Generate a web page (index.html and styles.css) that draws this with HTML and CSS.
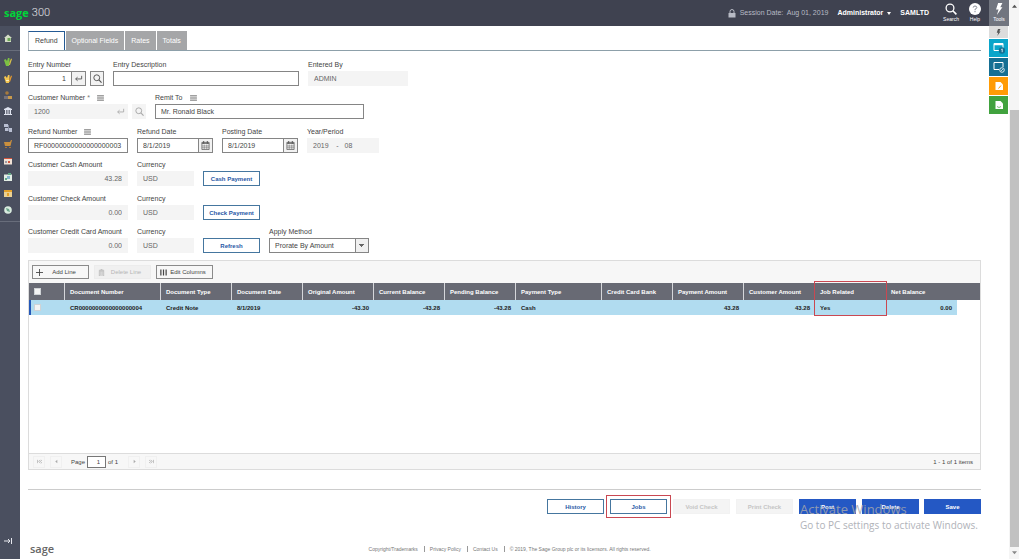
FILE: index.html
```html
<!DOCTYPE html>
<html lang="en">
<head>
<meta charset="utf-8">
<title>Refund Entry</title>
<link rel="stylesheet" href="styles.css">
</head>
<body>
<svg class="defs" aria-hidden="true">
  <symbol id="search" viewBox="0 0 12 12"><circle cx="5" cy="5" r="3.900" fill="none" stroke="currentColor" stroke-width="1.300"/><path d="M7.800 7.800l3.600 3.600" stroke="currentColor" stroke-width="1.600"/></symbol>
  <symbol id="enter" viewBox="0 0 10 8"><path d="M8.500 1v3.500H2M4 2.500l-2.200 2L4 6.500" fill="none" stroke="currentColor"/></symbol>
  <symbol id="menu" viewBox="0 0 8 7"><path d="M0 1h8M0 3.500h8M0 6h8" stroke="currentColor"/></symbol>
  <symbol id="cal" viewBox="0 0 10 10"><path d="M1 1.500h8v8H1z" fill="none" stroke="currentColor" stroke-width=".8"/><path d="M1 2.500h8M3 0v3M7 0v3" stroke="currentColor" stroke-width="1.100"/><path d="M1 5.500h8M1 7.500h8M3.600 4v5M6.400 4v5" stroke="currentColor" stroke-width=".5"/></symbol>
  <symbol id="bolt" viewBox="0 0 10 14"><path d="M4 0h5L6.500 5H9L2.500 14 4.500 7.500H1.500z" fill="currentColor"/></symbol>
</svg>
<div class="app">
  <header class="top">
    <div class="brand"><span class="sage">sage</span><span class="num">300</span></div>
    <div class="session">
      <svg class="lock" viewBox="0 0 8 9"><path d="M2 4V2.500a2 2 0 0 1 4 0V4" fill="none" stroke="currentColor"/><path d="M.5 4h7v4.500h-7z" fill="currentColor"/></svg>
      <span>Session Date:&nbsp; Aug 01, 2019</span>
    </div>
    <button class="user">Administrator <svg viewBox="0 0 4 3"><path d="M0 0h4L2 3z" fill="currentColor"/></svg></button>
    <span class="company">SAMLTD</span>
    <button class="util"><svg viewBox="0 0 12 12"><use href="#search"/></svg>Search</button>
    <button class="util help"><svg viewBox="0 0 12 12"><circle cx="6" cy="6" r="6" fill="#fff"/><path d="M4.200 4.600Q4.300 3 6 3t1.800 1.500Q7.800 5.600 6 6.300v.9M6 8v1.200" fill="none" stroke="#777c88" stroke-width=".9"/></svg>Help</button>
    <button class="util tools"><svg viewBox="0 0 10 14"><use href="#bolt"/></svg>Tools</button>
  </header>
  <nav class="side" aria-label="Modules">
    <a class="home" href="#" aria-label="Home"><svg viewBox="0 0 8 8"><path d="M0 4l4-3.500L8 4H7v4H1V4z" fill="#d3dcc5"/><path d="M3.500 4h3v3h-3z" fill="#6aa655"/></svg></a>
    <div class="modules">
      <a href="#" aria-label="Receivables"><svg viewBox="0 0 8 8"><path d="M0 2l1.500-1L3 3l1-3h1.500v3L5 8H2z" fill="#7cc143"/><path d="M5.500 4L7 .5l1 .5-2 6H5z" fill="#d8c24a"/></svg></a>
      <a href="#" aria-label="Payables"><svg viewBox="0 0 8 8"><path d="M0 2l1.500-1L3 3l1-3h1.500v3L5 8H2z" fill="#f3c650"/><path d="M5.500 4L7 .5l1 .5-2 6H5z" fill="#e79a2c"/><path d="M2 5h3v1H2z" fill="#fff0bd"/></svg></a>
      <a href="#" aria-label="Customers"><svg viewBox="0 0 8 8"><circle cx="3" cy="2" r="1.800" fill="#a87a3c"/><path d="M0 8V5h4v3z" fill="#77727a"/><path d="M4 5h4v3H4z" fill="#c89a4c"/></svg></a>
      <a href="#" aria-label="Bank"><svg viewBox="0 0 8 8"><path d="M4 0l4 2v1H0V2zM1 3h1.300v4H1zM3.400 3h1.200v4H3.400zM5.700 3H7v4H5.700zM0 7h8v1H0z" fill="#dfe3ef"/></svg></a>
      <a href="#" aria-label="Inventory"><svg viewBox="0 0 8 8"><path d="M0 0h4v3H0zM1 4h3v3H1zM5 4h3v4H5z" fill="#b9bfd2"/><path d="M4 1h1v6H4z" fill="#858ca2"/></svg></a>
      <a href="#" aria-label="Orders"><svg viewBox="0 0 8 8"><path d="M0 2h6l1-2h1L6.500 6H1z" fill="#c98f3e"/><path d="M1 7h2v1H1zM5 7h2v1H5z" fill="#a8763a"/></svg></a>
      <a href="#" aria-label="Purchasing"><svg viewBox="0 0 8 8"><path d="M0 1h8v6.500H0z" fill="#f1e2d6"/><path d="M0 1h8v1H0zM4 4h2v2H4z" fill="#d4563e"/><path d="M1 4h2v2H1z" fill="#9b9aa5"/></svg></a>
      <a href="#" aria-label="Reports"><svg viewBox="0 0 8 8"><path d="M0 1.500h8V8H0z" fill="#e3eee5"/><path d="M4 0h3v2H4zM1 5h2v2H1z" fill="#62a886"/><path d="M3 3h3v3H3z" fill="#88b5cf"/></svg></a>
      <a href="#" aria-label="Projects"><svg viewBox="0 0 8 8"><path d="M0 1h8v7H0z" fill="#ecd191"/><path d="M0 1h8v2H0zM3 4h2v3H3z" fill="#e4a12a"/></svg></a>
      <a href="#" aria-label="Administration"><svg viewBox="0 0 8 8"><circle cx="4" cy="4" r="3.800" fill="#d9ebdf"/><path d="M2 2l3 1 1 3-3-1z" fill="#6aa48a"/></svg></a>
    </div>
    <a class="expand" href="#" aria-label="Expand"><svg viewBox="0 0 8 8"><path d="M0 4h6M4 2l2 2-2 2M7.500 1v6" fill="none" stroke="#e6e8ee"/></svg></a>
  </nav>
  <main class="page">
    <div class="tabs" role="tablist">
      <button class="tab on" role="tab">Refund</button><button class="tab" role="tab">Optional Fields</button><button class="tab" role="tab">Rates</button><button class="tab" role="tab">Totals</button>
    </div>
    <form class="form">
      <div class="row">
        <div class="field w77"><label for="en">Entry Number</label>
          <div class="combo"><input id="en" class="right" value="1"><button type="button" class="ib" aria-label="Go"><svg viewBox="0 0 10 8"><use href="#enter"/></svg></button><button type="button" class="ib apart" aria-label="Find"><svg viewBox="0 0 12 12"><use href="#search"/></svg></button></div></div>
        <div class="field w186 g9"><label for="ed">Entry Description</label><input id="ed"></div>
        <div class="field w100 g9"><label for="eb">Entered By</label><input id="eb" value="ADMIN" disabled></div>
      </div>
      <div class="row">
        <div class="field w118"><label for="cn">Customer Number <i>*</i> <svg class="burger" viewBox="0 0 8 7"><use href="#menu"/></svg></label>
          <div class="combo off"><input id="cn" value="1200" disabled><button type="button" class="ib" disabled aria-label="Go"><svg viewBox="0 0 10 8"><use href="#enter"/></svg></button><button type="button" class="ib apart" disabled aria-label="Find"><svg viewBox="0 0 12 12"><use href="#search"/></svg></button></div></div>
        <div class="field w209 g9"><label for="rt">Remit To <svg class="burger" viewBox="0 0 8 7"><use href="#menu"/></svg></label><input id="rt" value="Mr. Ronald Black"></div>
      </div>
      <div class="row">
        <div class="field w100"><label for="rn">Refund Number <svg class="burger" viewBox="0 0 8 7"><use href="#menu"/></svg></label><input id="rn" value="RF00000000000000000003"></div>
        <div class="field w77 g9"><label for="rd">Refund Date</label><div class="combo"><input id="rd" value="8/1/2019"><button type="button" class="ib" aria-label="Pick refund date"><svg viewBox="0 0 10 10"><use href="#cal"/></svg></button></div></div>
        <div class="field w77 g9"><label for="pd">Posting Date</label><div class="combo"><input id="pd" value="8/1/2019"><button type="button" class="ib" aria-label="Pick posting date"><svg viewBox="0 0 10 10"><use href="#cal"/></svg></button></div></div>
        <div class="field w72 g9"><label for="yp">Year/Period</label><input id="yp" value="2019 &nbsp;&nbsp; - &nbsp;&nbsp;08" disabled></div>
      </div>
      <div class="row">
        <div class="field w100"><label for="ca">Customer Cash Amount</label><input id="ca" class="right" value="43.28" disabled></div>
        <div class="field w57 g9"><label for="c1">Currency</label><input id="c1" value="USD" disabled></div>
        <button type="button" class="btn g9">Cash Payment</button>
      </div>
      <div class="row">
        <div class="field w100"><label for="ck">Customer Check Amount</label><input id="ck" class="right" value="0.00" disabled></div>
        <div class="field w57 g9"><label for="c2">Currency</label><input id="c2" value="USD" disabled></div>
        <button type="button" class="btn g9">Check Payment</button>
      </div>
      <div class="row">
        <div class="field w100"><label for="cc">Customer Credit Card Amount</label><input id="cc" class="right" value="0.00" disabled></div>
        <div class="field w57 g9"><label for="c3">Currency</label><input id="c3" value="USD" disabled></div>
        <button type="button" class="btn g9">Refresh</button>
        <div class="field w100 g9"><label for="am">Apply Method</label><select id="am"><option>Prorate By Amount</option></select></div>
      </div>
    </form>
    <section class="grid">
      <div class="bar">
        <button class="gb"><svg viewBox="0 0 8 8"><path d="M4 0v8M0 4h8" stroke="currentColor"/></svg><span>Add Line</span></button>
        <button class="gb" disabled><svg viewBox="0 0 8 8"><path d="M1 1.500h6M3 .5h2M1.500 2.500h5V8h-5zM3.200 3v4M4.800 3v4" fill="none" stroke="currentColor" stroke-width=".9"/></svg><span>Delete Line</span></button>
        <button class="gb"><svg viewBox="0 0 8 8"><path d="M1 .5v7M4 .5v7M7 .5v7" stroke="currentColor" stroke-width="1.400"/></svg><span>Edit Columns</span></button>
      </div>
      <div class="rows">
        <table>
          <colgroup><col class="c-check"><col class="c-doc"><col class="c-std"><col class="c-std"><col class="c-std"><col class="c-std"><col class="c-std"><col class="c-type"><col class="c-std"><col class="c-std"><col class="c-std"><col class="c-std"><col class="c-std"><col></colgroup>
          <thead><tr><th><input type="checkbox" aria-label="Select all"></th><th>Document Number</th><th>Document Type</th><th>Document Date</th><th>Original Amount</th><th>Current Balance</th><th>Pending Balance</th><th>Payment Type</th><th>Credit Card Bank</th><th>Payment Amount</th><th>Customer Amount</th><th class="mark">Job Related</th><th>Net Balance</th><th></th></tr></thead>
          <tbody><tr><td class="sel"><input type="checkbox" aria-label="Select line"></td><td>CR0000000000000000004</td><td>Credit Note</td><td>8/1/2019</td><td class="n">-43.30</td><td class="n">-43.28</td><td class="n">-43.28</td><td>Cash</td><td></td><td class="n">43.28</td><td class="n">43.28</td><td>Yes</td><td class="n">0.00</td><td class="rest"></td></tr></tbody>
        </table>
      </div>
      <div class="pager">
        <button disabled aria-label="First"><svg viewBox="0 0 6 6"><path d="M.5 1v4M4 1L2 3l2 2M6 1L4 3l2 2" fill="none" stroke="currentColor" stroke-width=".9"/></svg></button>
        <button disabled aria-label="Previous"><svg viewBox="0 0 6 6"><path d="M1.500 3L4 .8v4.400z" fill="currentColor"/></svg></button>
        <label for="pg">Page</label><input id="pg" value="1"><span class="of">of 1</span>
        <button disabled aria-label="Next"><svg viewBox="0 0 6 6"><path d="M4.500 3L2 .8v4.400z" fill="currentColor"/></svg></button>
        <button disabled aria-label="Last"><svg viewBox="0 0 6 6"><path d="M5.500 1v4M2 1l2 2-2 2M0 1l2 2-2 2" fill="none" stroke="currentColor" stroke-width=".9"/></svg></button>
        <span class="count">1 - 1 of 1 items</span>
      </div>
    </section>
    <div class="actions">
      <button class="btn">History</button><button class="btn outlined">Jobs</button><button class="btn" disabled>Void Check</button><button class="btn" disabled>Print Check</button><button class="btn primary">Post</button><button class="btn primary">Delete</button><button class="btn primary last">Save</button>
      <div class="notice"><strong>Activate Windows</strong><span>Go to PC settings to activate Windows.</span></div>
    </div>
    <footer class="foot">
      <span class="mini">sage</span>
      <div class="legal"><a href="#">Copyright/Trademarks</a><a href="#">Privacy Policy</a><a href="#">Contact Us</a><span>© 2019, The Sage Group plc or its licensors. All rights reserved.</span></div>
    </footer>
  </main>
  <aside class="rail">
    <button class="r0" aria-label="Tools"><svg viewBox="0 0 10 14"><use href="#bolt"/></svg></button>
    <button class="r1" aria-label="Open windows"><svg viewBox="0 0 12 12"><path d="M1 1.500h9v7H1z" fill="none" stroke="#fff"/><path d="M1 2.500h9" stroke="#fff" stroke-width="1.500"/><circle cx="9" cy="8.500" r="3.200" fill="#156f93"/><path d="M8.300 7.500l.9-.6v3.300" fill="none" stroke="#fff" stroke-width=".8"/></svg></button>
    <button class="r2" aria-label="Recent windows"><svg viewBox="0 0 12 12"><path d="M6 8.500H1v-7h9V6" fill="none" stroke="#fff"/><circle cx="9" cy="9" r="2.300" fill="#156f93" stroke="#fff" stroke-width=".8"/><path d="M8 10l2-2" stroke="#fff" stroke-width=".7"/></svg></button>
    <button class="r3" aria-label="Edit report"><svg viewBox="0 0 12 12"><path d="M2.500 2h5L10 4.500V10H2.500z" fill="#fff"/><path d="M5.500 8.500L8 5.500" stroke="#ff9b05"/></svg></button>
    <button class="r4" aria-label="Report"><svg viewBox="0 0 12 12"><path d="M2.500 2h5L10 4.500V10H2.500z" fill="#fff"/><path d="M4 7.500l2 1 2-1" fill="none" stroke="#41a23e" stroke-width=".7"/></svg></button>
  </aside>
  <div class="scroll" aria-hidden="true"><svg viewBox="0 0 6 4"><path d="M0 4l3-3.500L6 4z" fill="#555"/></svg><i></i><svg viewBox="0 0 6 4"><path d="M0 0h6L3 3.500z" fill="#888"/></svg></div>
</div>
</body>
</html>
```
FILE: styles.css
```css
* { box-sizing: border-box; }
body { margin: 0; background: #fff; color: #444; font: 7px/10px "Liberation Sans", Arial, sans-serif; }
button, input, select { font: inherit; color: inherit; margin: 0; padding: 0; border: 0; border-radius: 0; background: none; }
a { color: inherit; text-decoration: none; }
svg { display: block; }
.defs { display: none; }

.app { display: grid; grid-template: 26px 1fr / 20px minmax(0, 1fr) 20px 15px; min-height: 100vh; }

/* Header */
.top { grid-column: 1 / 4; display: flex; align-items: stretch; background: #3f4250; color: #fff; }
.brand { display: flex; align-items: center; gap: 3px; padding-left: 4px; margin-right: auto; }
.sage { color: #00d639; font: bold 11px/14px "Open Sans", sans-serif; }
.num { font: 300 11px/14px Roboto, sans-serif; color: #e5e6ea; }
.session { display: flex; align-items: center; gap: 4px; color: #b8bbc5; }
.lock { width: 8px; height: 9px; }
.user { display: flex; align-items: center; gap: 4px; margin-left: 9px; font-weight: bold; }
.user svg { width: 4px; height: 3px; }
.company { align-self: center; margin: 0 10px 0 9px; font-weight: bold; }
.util { display: flex; flex-direction: column; align-items: center; width: 24px; padding-top: 3px; font-size: 5px; line-height: 6px; gap: 1px; }
.util svg { width: 12px; height: 12px; }
.help { margin-right: 2px; }
.tools { width: 20px; background: #71757f; }

/* Sidebar */
.side { display: flex; flex-direction: column; background: #4a4f5f; }
.side a { display: flex; align-items: center; justify-content: center; padding-right: 4px; }
.side svg { width: 8px; height: 8px; }
.side .home { height: 25px; border-bottom: 1px solid #686d7b; }
.modules { display: flex; flex-direction: column; height: 171px; padding: 3px 0; border-bottom: 1px solid #686d7b; }
.modules a { flex: 1; }
.side .expand { margin: auto 0 14px; }

/* Page */
.page { display: flex; flex-direction: column; padding: 5px 8px 0; }
.tabs { display: flex; gap: 1px; border-bottom: 1px solid #8da0aa; }
.tab { height: 19px; padding: 0 6px; background: #a5a6a8; color: #fff; }
.tab.on { background: #fff; color: #444; border: 1px solid #b5bbc2; border-top: 1px solid #255a94; border-right: 1px solid #255a94; border-bottom: 0; }
.form { display: flex; flex-direction: column; padding-top: 8px; gap: 6px; }
.row { display: flex; align-items: flex-end; }
.row:nth-child(even) { margin-bottom: 1px; }
.field { display: flex; flex-direction: column; }
.field label { display: flex; align-items: center; gap: 2px; height: 12px; }
.field i { font-style: normal; color: #777; }
.burger { width: 7px; height: 6px; margin-left: 5px; color: #555; }
.g9 { margin-left: 9px; }
.w57 { width: 57px; }
.w72 { width: 72px; }
.w77 { width: 76px; }
.w100 { width: 100px; }
.w118 { width: 118px; }
.w186 { width: 186px; }
.w209 { width: 209px; }
.field input, .field select { width: 100%; min-width: 0; height: 15px; padding: 0 5px; border: 1px solid #858585; background: #fff; }
.field input:disabled { background: #f4f4f4; border-color: #f4f4f4; color: #666; }
.field .right { text-align: right; }
.combo { display: flex; }
.combo input { flex: 1; }
.ib { flex: none; display: flex; align-items: center; justify-content: center; width: 14px; height: 15px; border: 1px solid #858585; border-left: 0; background: #f2f2f2; color: #555; }
.ib svg { width: 9px; height: 9px; }
.ib.apart { margin-left: 4px; border-left: 1px solid #858585; }
.off .ib, .off .ib.apart { border-color: #f4f4f4; background: #f4f4f4; color: #aaa; }
.field select { appearance: none; background: linear-gradient(#858585, #858585) right 12px top / 1px 100% no-repeat, linear-gradient(#666, #666) right 4px top 5px / 5px 1px no-repeat, linear-gradient(#666, #666) right 5px top 6px / 3px 1px no-repeat, linear-gradient(#666, #666) right 6px top 7px / 1px 1px no-repeat, linear-gradient(to left, #f0f0f0 12px, #fff 0); }
.btn { width: 57px; height: 15px; border: 1px solid #45769f; background: #fff; color: #2958a5; font-size: 6px; font-weight: bold; text-align: center; }

/* Grid */
.grid { display: flex; flex-direction: column; margin-top: 6px; border: 1px solid #dcdcdc; }
.bar { display: flex; gap: 5px; padding: 4px 3px; background: #f7f7f7; }
.gb { display: flex; align-items: center; width: 57px; height: 14px; padding: 0 3px; border: 1px solid #8a8a8a; background: #f7f7f7; font-size: 6px; }
.gb svg { flex: none; width: 7px; height: 7px; }
.gb span { flex: 1; text-align: center; white-space: nowrap; }
.gb:disabled { border-color: #ececec; background: #f0f0f0; color: #b5b5b5; }
.rows { height: 170px; }
table { width: 100%; table-layout: fixed; border-collapse: separate; border-spacing: 0; font-size: 6px; }
.c-check { width: 36px; }
.c-doc { width: 96px; }
.c-std { width: 71px; }
.c-type { width: 86px; }
th, td { padding: 0 5px; text-align: left; white-space: nowrap; }
th { height: 17px; background: #686a74; color: #fff; border-right: 1px solid #d5d6da; }
th:nth-child(n+11) { border-right-color: #686a74; }
td { height: 15px; background: #b1dcf0; color: #222; font-weight: bold; }
td.n { text-align: right; }
td.sel { border-left: 2px solid #2558b8; padding-left: 3px; }
td.rest { background: #fff; }
th.mark { position: relative; }
th.mark::after { content: ""; position: absolute; inset: -2px -2px -16px -1px; border: 1px solid #c94852; }
input[type="checkbox"] { appearance: none; display: block; width: 7px; height: 7px; background: #f4f4f4; border: 1px solid #cfd3d6; }
.pager { display: flex; align-items: center; height: 16px; padding: 0 7px 0 4px; border-top: 1px solid #dcdcdc; background: #f7f7f7; font-size: 6px; }
.pager button { width: 12px; height: 12px; margin-right: 5px; border: 1px solid #f0f0f0; color: #aaa; display: flex; align-items: center; justify-content: center; }
.pager svg { width: 5px; height: 5px; }
.pager label { margin-left: 4px; }
.pager input { width: 19px; height: 12px; margin: 0 2px; padding-right: 5px; border: 1px solid #777; background: #fff; text-align: right; }
.pager .of { margin-right: 10px; }
.count { margin-left: auto; }

/* Actions */
.actions { position: relative; display: flex; justify-content: flex-end; gap: 6px; margin-top: 19px; padding-top: 9px; border-top: 1px solid #ccc; }
.actions .btn:disabled { border-color: #f2f2f2; background: #f4f4f4; color: #c5c5c5; }
.actions .primary { border-color: #2458c4; background: #2458c4; color: #fff; }
.actions .last { margin-left: -1px; }
.actions .outlined { box-shadow: 0 0 0 3px #fff, 0 0 0 4px #c94852; }
.notice { position: absolute; top: 11px; right: 3px; display: flex; flex-direction: column; color: #a3a6ad; font: 10px/16px "Open Sans", sans-serif; opacity: .85; pointer-events: none; white-space: nowrap; }
.notice strong { font-size: 13px; font-weight: 400; }

/* Footer */
.foot { display: flex; align-items: center; height: 20px; margin-top: auto; padding-left: 2px; }
.mini { font: 600 11px/14px "Open Sans", sans-serif; color: #666; }
.legal { flex: 1; display: flex; justify-content: center; margin-right: 16px; font-size: 5px; line-height: 6px; color: #777; }
.legal > * + * { margin-left: 6px; padding-left: 5px; border-left: 1px solid #999; }

/* Tool rail */
.rail { display: flex; flex-direction: column; gap: 1px; }
.rail button { display: flex; align-items: center; justify-content: center; width: 19px; height: 18px; }
.rail svg { width: 12px; height: 12px; }
.rail .r0 { height: 12px; background: #dcdcdc; color: #555; }
.rail .r0 svg { width: 5px; height: 7px; }
.r1 { background: #0aa5ca; }
.r2 { background: #156f93; }
.r3 { background: #ff9b05; }
.r4 { background: #41a23e; }

/* Scroll track */
.scroll { grid-column: 4; grid-row: 1 / 3; display: flex; flex-direction: column; align-items: center; width: 10px; padding: 4px 0; background: #f5f5f5; }
.scroll svg { width: 5px; height: 4px; }
.scroll i { flex: 1; width: 9px; margin: 102px 0 4px; background: #c1c1c1; }
```
